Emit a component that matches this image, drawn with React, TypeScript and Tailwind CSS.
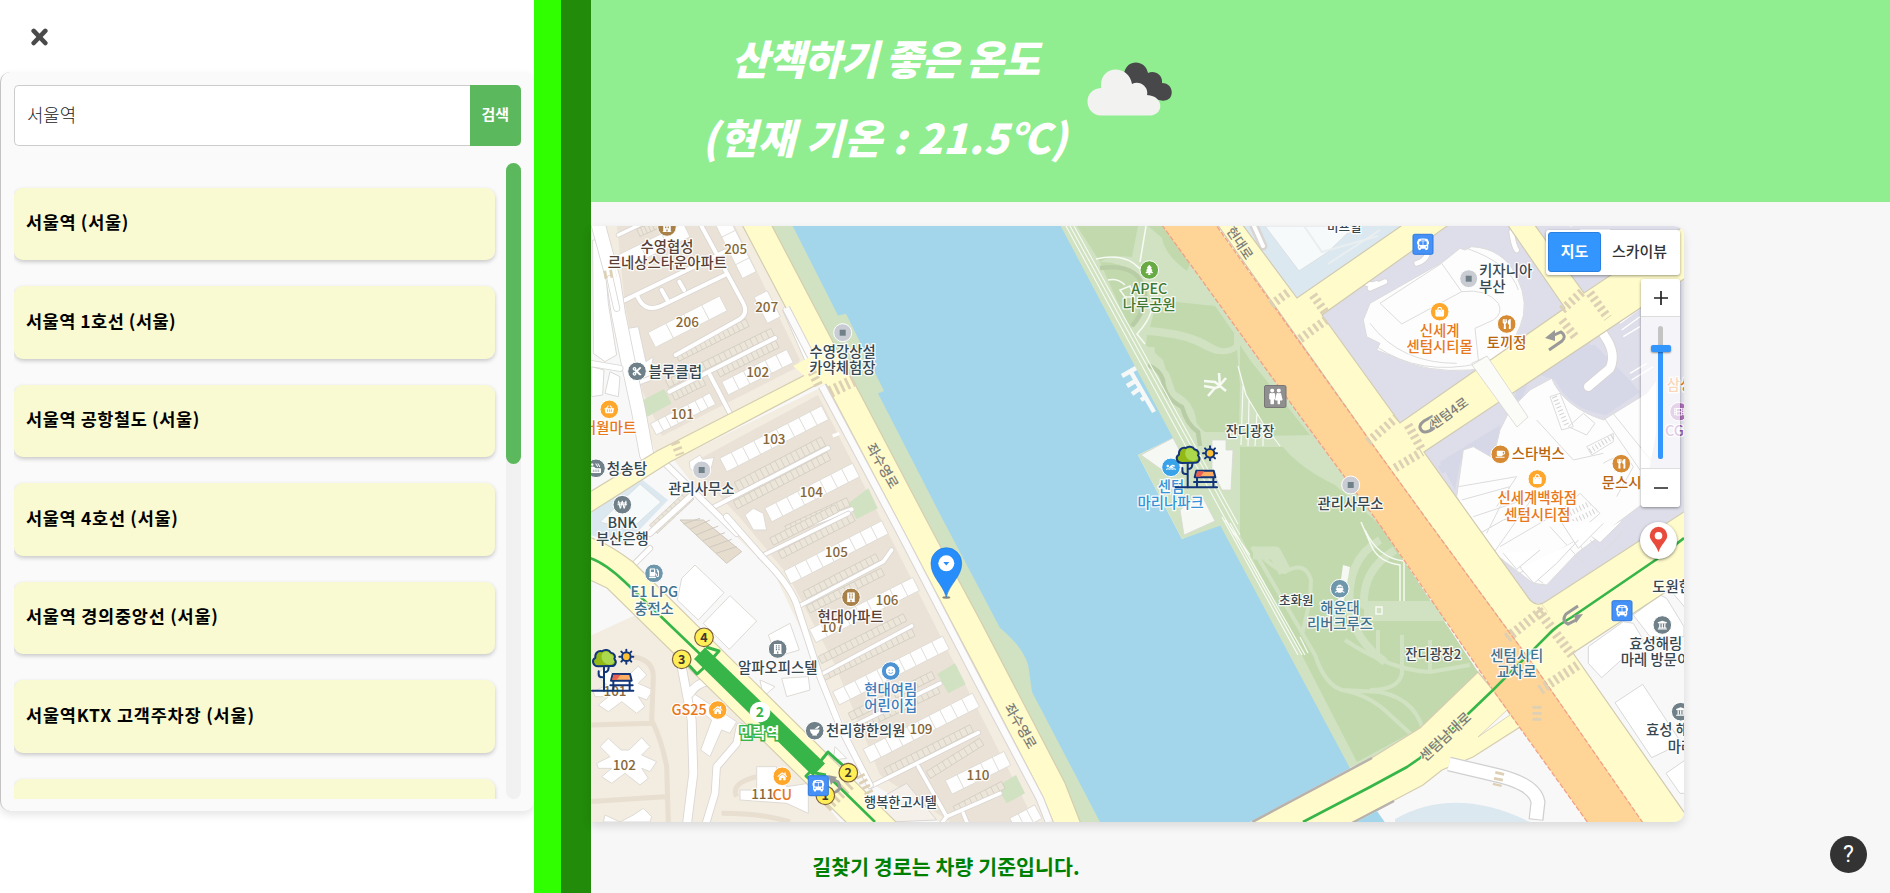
import React from "react";
import { FaTree, FaShoppingBasket, FaWonSign, FaGasPump, FaBuilding, FaUtensils, FaShoppingBag, FaCoffee, FaBusAlt, FaSwimmer, FaShip, FaMale, FaFemale, FaUniversity, FaHome, FaHotTub, FaSmile, FaCut, FaMortarPestle, FaFilm } from "react-icons/fa";

const KR = "font-['Noto_Sans_CJK_KR',sans-serif]";

const results = [
  { name: "서울역 (서울)", cls: "tracking-[0.65px]" },
  { name: "서울역 1호선 (서울)", cls: "tracking-[0.5px]" },
  { name: "서울역 공항철도 (서울)", cls: "tracking-[0.6px]" },
  { name: "서울역 4호선 (서울)", cls: "tracking-[0.7px]" },
  { name: "서울역 경의중앙선 (서울)", cls: "tracking-[0.75px]" },
  { name: "서울역KTX 고객주차장 (서울)", cls: "tracking-[0.8px]" },
  { name: "", cls: "" },
];

type StripProps = { p: [number, number, number, number]; w: number; n: number; fill?: string; stroke?: string; sw?: number };

/** A row of adjoining cells laid along a line: house blocks and parking bays. */
function Strip({ p, w, n, fill = "#fefefe", stroke = "#dedad4", sw = 2.5 }: StripProps) {
  const [x1, y1, x2, y2] = p;
  const len = Math.hypot(x2 - x1, y2 - y1);
  const a = (Math.atan2(y2 - y1, x2 - x1) * 180) / Math.PI;
  return (
    <g transform={`translate(${x1} ${y1}) rotate(${a})`} fill={fill} stroke={stroke} strokeWidth={sw}>
      <rect x={0} y={-w / 2} width={len} height={w} />
      {Array.from({ length: n - 1 }, (_, i) => (
        <line key={i} x1={((i + 1) * len) / n} x2={((i + 1) * len) / n} y1={-w / 2} y2={w / 2} />
      ))}
    </g>
  );
}

function Parking({ p, n, w = 24 }: { p: [number, number, number, number]; n: number; w?: number }) {
  return <Strip p={p} w={w} n={n} fill="#ece5d9" stroke="#cfc9be" sw={2} />;
}

function Lane({ d, w = 12 }: { d: string; w?: number }) {
  return (
    <g fill="none" strokeLinejoin="round" strokeLinecap="round">
      <path d={d} stroke="#d9d5d2" strokeWidth={w + 5} />
      <path d={d} stroke="#fff" strokeWidth={w} />
    </g>
  );
}

function Crosswalk({ p, w = 9, c = "#ddd0b4" }: { p: [number, number, number, number]; w?: number; c?: string }) {
  const [x1, y1, x2, y2] = p;
  return <line x1={x1} y1={y1} x2={x2} y2={y2} stroke={c} strokeWidth={w} strokeDasharray="2.8 3.2" />;
}

type Label = [string, number, number, string?, number?, ("start" | "middle")?, number?];
const DK = "#37474f";
const BR = "#5a4136";
const NO = "#86683a";
const OR = "#e8781a";
const OB = "#b8650f";
const BL = "#3f7390";
const ROAD = "#7d7d78";

const labels: Label[] = [
  ["107", 832.3, 627.3, NO, 13.5],
  ["101", 615, 690.7, NO, 13.5],
  ["수영협성", 667, 246.8, BR],
  ["르네상스타운아파트", 667.3, 262.8, BR],
  ["205", 735.7, 249.5, NO, 13.5],
  ["207", 766.7, 307, NO, 13.5],
  ["206", 687.3, 321.8, NO, 13.5],
  ["102", 757.7, 372, NO, 13.5],
  ["101", 682.3, 414, NO, 13.5],
  ["103", 774, 439, NO, 13.5],
  ["104", 811.3, 492.3, NO, 13.5],
  ["105", 836.3, 552, NO, 13.5],
  ["106", 887, 599.7, NO, 13.5],
  ["109", 921, 728.7, NO, 13.5],
  ["110", 978, 774.7, NO, 13.5],
  ["102", 624.3, 764.7, NO, 13.5],
  ["111", 762.7, 794.4, NO, 13.5],
  ["블루클럽", 675.3, 371.8, DK, 14.6],
  ["더월마트", 609.5, 427.5, OR, 14.6],
  ["청송탕", 627, 468.5, DK, 14.6],
  ["관리사무소", 701.4, 488.8, DK],
  ["BNK", 622.3, 522.8, DK],
  ["부산은행", 622.4, 538.8, DK],
  ["수영강상설", 842.7, 351.8, DK],
  ["카약체험장", 842.3, 367.8, DK],
  ["E1 LPG", 654.3, 592, BL],
  ["충전소", 654, 608.5, BL],
  ["현대아파트", 850.5, 616.2, BR],
  ["현대여림", 890.7, 689.7, "#3c7dbd"],
  ["어린이집", 890.7, 706, "#3c7dbd"],
  ["천리향한의원", 865.7, 730.7, DK],
  ["알파오피스텔", 777.7, 668, DK],
  ["GS25", 689, 709.8, OR],
  ["CU", 782.3, 795, OR],
  ["행복한고시텔", 900.5, 802, DK, 13.2],
  ["APEC", 1149.3, 288.4, "#3f7a35"],
  ["나루공원", 1149.3, 304.5, "#3f7a35"],
  ["잔디광장", 1250, 430.7, DK, 13.2],
  ["관리사무소", 1350.5, 503.6, DK],
  ["센텀", 1171, 486.3, "#3593d6"],
  ["마리나파크", 1170.7, 502.4, "#3593d6"],
  ["비프힐", 1344.3, 227.8, DK, 12.5],
  ["현대로", 1240, 243, ROAD, 13, "middle", 56],
  ["좌수영로", 882.7, 465.7, ROAD, 13.5, "middle", 60],
  ["좌수영로", 1020.7, 726, ROAD, 13.5, "middle", 60],
  ["초화원", 1296.3, 600.8, DK, 12.5],
  ["해운대", 1340, 607.4, BL],
  ["리버크루즈", 1340, 623.4, BL],
  ["키자니아", 1479, 270.8, DK, 14.5, "start"],
  ["부산", 1479, 287, DK, 14.5, "start"],
  ["신세계", 1439.7, 330.4, OR],
  ["센텀시티몰", 1439.7, 346.6, OR],
  ["토끼정", 1506.7, 343, OB],
  ["센텀4로", 1449, 413, ROAD, 13, "middle", -36],
  ["스타벅스", 1538.3, 454, OB],
  ["신세계백화점", 1537.3, 498, OR],
  ["센텀시티점", 1537.3, 514.4, OR],
  ["문스시", 1601.7, 482.6, OB, 14.4, "start"],
  ["삼성", 1666.7, 385, OR, 14.4, "start"],
  ["CG", 1665, 430.5, "#9a55a8", 14.4, "start"],
  ["도원한", 1652.3, 586.7, DK, 14.4, "start"],
  ["효성해링", 1629.3, 643.2, DK, 14.4, "start"],
  ["마레 방문이", 1620.7, 659.4, DK, 14.4, "start"],
  ["효성 해", 1646, 730, DK, 14.4, "start"],
  ["마레", 1667.7, 746.4, DK, 14.4, "start"],
  ["잔디광장2", 1433.3, 654, DK, 13.2],
  ["센텀시티", 1516.7, 655.4, BL],
  ["교차로", 1516.7, 671.7, BL],
  ["센텀남대로", 1445, 736.7, ROAD, 14, "middle", -43],
];

const SL = "#708089";
const pois: [number, number, string, React.ComponentType<any>][] = [
  [667, 227, "#a88148", FaBuilding],
  [637, 371.3, SL, FaCut],
  [609.3, 409.3, "#ffa72b", FaShoppingBasket],
  [596, 468.3, SL, FaHotTub],
  [622.3, 504.7, SL, FaWonSign],
  [654, 573.3, "#6f97ab", FaGasPump],
  [777.7, 649, SL, FaBuilding],
  [717.7, 710, "#ffa72b", FaHome],
  [814.7, 730.7, SL, FaMortarPestle],
  [782.3, 776.3, "#ffa72b", FaHome],
  [851, 597.3, "#a88148", FaBuilding],
  [890.7, 671, "#4d92d2", FaSmile],
  [1149.3, 270, "#68ab45", FaTree],
  [1171, 467.3, "#38a3e8", FaSwimmer],
  [1339.7, 588.7, "#6f97ab", FaShip],
  [1439.7, 311.7, "#ffa72b", FaShoppingBag],
  [1506.7, 324, "#d58a33", FaUtensils],
  [1500.3, 454.3, "#d58a33", FaCoffee],
  [1537.3, 479, "#ffa72b", FaShoppingBag],
  [1621.3, 463.7, "#d58a33", FaUtensils],
  [1679, 411.7, "#a86cb5", FaFilm],
  [1662.3, 625, SL, FaUniversity],
  [1680.7, 711.7, SL, FaUniversity],
];

const squares: [number, number][] = [[701.7, 470], [842.7, 332.7], [1350.7, 485], [1468.7, 278.7]];
const buses: [number, number][] = [[1423, 244.3], [818.3, 785.7], [1622, 610.7]];
const exits: [string, number, number][] = [["4", 704, 637.3], ["3", 681.7, 659.3], ["2", 848.3, 772.7], ["1", 825.3, 795.3]];

function ParkMarker({ x, y }: { x: number; y: number }) {
  return (
    <g transform={`translate(${x} ${y}) scale(.3333)`} stroke="#12357a" strokeWidth={6} strokeLinejoin="round" strokeLinecap="round" fill="none">
      <path d="M36 50V124M36 84H30Q20 84 20 74V66M36 68H42Q50 66 50 54V46" />
      <path d="M18 51C2 50 -2 32 10 26C8 12 18 3 30 6C38 -1 52 2 56 10C68 12 72 22 67 29C76 38 70 51 57 50Z" fill="#93b916" />
      <path d="M52 46C30 42 24 24 32 10Q50 2 54 14Q66 16 63 28Q74 42 52 46Z" fill="#acd84d" stroke="none" />
      <circle cx={103} cy={22} r={13} fill="#fcc032" />
      <path d="M103 1V5M103 39V43M82 22H86M120 22H124M88 7L91 10M115 34L118 37M118 7L115 10M91 34L88 37" />
      <path d="M62 74H114L119 94H57Z" fill="#ffad63" />
      <path d="M64 76H86L74 92H61Z" fill="#ea6153" stroke="none" />
      <path d="M64 95V123M113 95V123M55 108H122M0 124H124" />
    </g>
  );
}

function CityMap() {
  return (
    <svg className={`block h-full w-full ${KR}`} viewBox="591 226 1093 596" preserveAspectRatio="none">
      <rect x={591} y={226} width={1093} height={596} fill="#f8f8f8" />

      {/* residential land */}
      <path d="M604 226H745L812 360L806 376L655 452L637 395L622 310Z" fill="#f3ece1" />
      <path d="M617 226H735L800 360L796 368L662 436L642 390L625 305Z" fill="#eae2d6" />
      <path d="M674 460L820 388L1050 822H940L870 783L820 670L775 575L725 525Z" fill="#f3ece1" />
      <path d="M690 464L818 395L1035 822H950L880 775L835 665L788 575L742 520Z" fill="#eae2d6" />
      <path d="M590 636L655 606L700 650L840 822H590Z" fill="#f3ece1" />
      <path d="M590 505L640 478L668 500L625 545L590 535Z" fill="#dce8f0" />
      <path d="M640 484L661 502L630 530L600 522Z" fill="#f6fafb" stroke="#dbe0e3" />

      <g transform="translate(590 220) scale(.33333)">
        <path d="M150 545L222 507L245 550L172 590ZM775 850L835 805L863 865L800 897Z" fill="#d0e2c1" />
        <path d="M8 60H40L55 250L80 405L45 425L10 400ZM5 440L42 450L38 525L5 530ZM60 455L90 470L85 530L45 520ZM115 325L145 320L168 425L190 410L180 470L150 480L130 470Z" fill="#fff" stroke="#dcd9d6" strokeWidth={3} />
        <Strip p={[395, 0, 478, 165]} w={46} n={4} />
        <Strip p={[512, 222, 552, 300]} w={44} n={2} />
        <Strip p={[95, 125, 290, 30]} w={46} n={3} />
        <Strip p={[185, 360, 400, 250]} w={50} n={4} />
        <Strip p={[405, 505, 600, 408]} w={44} n={6} />
        <Strip p={[190, 628, 368, 536]} w={38} n={8} />
        <Strip p={[400, 735, 705, 578]} w={46} n={9} />
        <Strip p={[535, 885, 798, 750]} w={46} n={8} />
        <Parking p={[262, 413, 472, 308]} n={15} />
        <Parking p={[232, 492, 548, 336]} n={20} />
        <Parking p={[385, 460, 562, 372]} n={12} />
        <Parking p={[250, 530, 342, 484]} n={7} />
        <Parking p={[440, 800, 700, 664]} n={17} w={30} />
        <Parking p={[436, 855, 716, 708]} n={18} w={26} />
        <Parking p={[590, 930, 775, 845]} n={12} w={26} />
        <Parking p={[145, 38, 200, 14]} n={5} />
        <Parking p={[190, 928, 300, 825]} n={9} w={34} />
        <Lane d="M85 45L175 2" w={10} />
        <Lane d="M95 245L405 95M330 10L460 250Q475 280 450 297L257 405M142 228Q165 285 225 252L405 165M232 240L215 210M282 210L268 185" />
        <Lane d="M238 515L555 354M360 465L420 580M140 490L205 465" />
        <Lane d="M370 862L714 684M600 935L785 868" />
        <Lane d="M25 15L70 180L85 280L115 430L145 570L170 705" w={40} />
        <Lane d="M0 430L90 445M80 265L60 175" w={16} />
        <Lane d="M225 730L440 940M180 940L300 830" w={16} />
        <path d="M298 725L330 705L338 718L372 712L360 760L330 772L300 745ZM465 885L490 865L520 880L530 930H490Z" fill="#fff" stroke="#dedad4" strokeWidth={3} />
        <path d="M728 648L748 640" stroke="#fff" strokeWidth={9} />
        <Lane d="M590 270L665 440" w={20} />
      </g>

      <g transform="translate(590 520) scale(.33333)">
        <path d="M1042 462L1095 430L1127 493L1075 520ZM1220 800L1278 765L1305 820L1250 850Z" fill="#d0e2c1" />
        <path d="M270 0L340 0L455 95L410 130Z" fill="#e6ddcf" stroke="#cfc9be" strokeWidth={3} />
        <path d="M280 12L330 -5M300 28L360 0M318 45L385 18M338 62L405 38M358 82L425 58M378 100L440 80" stroke="#cfc9be" strokeWidth={3} />
        <Strip p={[592, 172, 885, 22]} w={44} n={9} />
        <Strip p={[668, 348, 978, 192]} w={44} n={9} />
        <Strip p={[738, 535, 1068, 368]} w={44} n={10} />
        <Strip p={[830, 708, 1158, 540]} w={46} n={10} />
        <Strip p={[1076, 802, 1252, 715]} w={46} n={5} />
        <Strip p={[1270, 915, 1345, 875]} w={46} n={3} />
        <Parking p={[545, 65, 740, -35]} n={13} />
        <Parking p={[570, 105, 790, -8]} n={14} />
        <Parking p={[645, 225, 862, 112]} n={14} />
        <Parking p={[655, 268, 878, 155]} n={14} />
        <Parking p={[690, 420, 945, 292]} n={16} />
        <Parking p={[700, 470, 970, 337]} n={17} />
        <Parking p={[780, 590, 1030, 465]} n={15} />
        <Parking p={[800, 625, 1045, 508]} n={15} />
        <Parking p={[888, 755, 1145, 625]} n={16} />
        <Parking p={[1015, 765, 1175, 665]} n={10} />
        <Parking p={[1095, 870, 1240, 795]} n={9} />
        <Lane d="M510 110L775 -20M620 262L880 125L905 90M690 465L965 318M755 635L1050 490M840 800L1165 638M985 740L1070 890L1230 820M1070 890L1040 930M1120 880L1140 930" w={11} />
        <Lane d="M410 -10L520 115Q610 205 625 270L690 470L750 620L840 795" w={17} />
        <path d="M275 175L315 135L402 218L325 300L262 240ZM420 227L500 303L418 388L340 310ZM535 345L600 310L628 390L560 410ZM575 475L655 470L660 510L590 530ZM735 680L770 715L730 720Z" fill="#fff" stroke="#dedad4" strokeWidth={3} />
        <path d="M310 520L440 605L420 640L395 630L360 710L332 690L365 600L300 550ZM500 740H560V780H590V800L655 790V880L590 850L450 840V810H500ZM510 480L555 500L520 530ZM45 885L90 906L130 885L160 865L185 890L180 906H40Z" fill="#fff" stroke="#dedad4" strokeWidth={3} />
        {[[105, 725], [95, 510]].map(([x, y]) => (
          <path key={y} transform={`translate(${x} ${y})`} d="M-75 -45L-50 -70L-12 -35L12 -35L50 -72L75 -45L50 -20L95 0L75 30L50 20L70 50L45 70L0 35L-40 65L-70 45L-40 20L-80 20L-85 5L-45 -15Z" fill="#fff" stroke="#dedad4" strokeWidth={3} />
        ))}
        <path d="M130 410Q190 420 190 470L185 600Q215 660 230 740L235 906M0 615L185 610M0 845L225 830M395 880Q520 880 600 906M440 830Q420 790 500 770" stroke="#e8dfd1" strokeWidth={15} fill="none" />
        <Lane d="M275 440L305 600L310 760L290 920M300 520Q320 490 350 485" w={24} />
        <Lane d="M450 620L440 670L380 740L375 820L345 920" w={20} />
        <Lane d="M135 130L180 85" w={14} />
        <path d="M900 906L860 840L950 790L1040 900Z" fill="#f5f1ea" stroke="#d9d5d2" strokeWidth={3} />
      </g>

      {/* river, banks and park */}
      <path d="M771 226H800L846 310L890 393L950 520L1005 610L1045 640L1050 700L1105 822H1075L1065 783L932 530Z" fill="#d0e2c1" />
      <path d="M1055 226H1163L1308 427L1380 525L1478 672L1420 728L1370 759L1345 770Z" fill="#d0e2c1" />
      <path d="M792.7 226L838 315.5L846 313.7L884 391L878 393.5L943 520L980 590L1000 628Q1029 652 1029.500 674L1032 692L1100 822H1250L1350 768.3L1218.3 521.7L1182 539L1138 455L1173 438L1060.7 226Z" fill="#a3d6eb" />
      <path d="M1138 455L1173 438L1222 525L1182 539Z" fill="#d0e2c1" />
      <path d="M1141 455L1173 438L1182 455L1183 470L1172 477ZM1180 510L1201 494L1215 521L1184 535Z" fill="#f6f8f4" stroke="#d8d8d2" strokeWidth={0.8} />
      <path d="M1212 440H1226V450H1233L1231 490H1222L1212 470Z" fill="#f6f8f4" stroke="#d8d8d2" strokeWidth={0.8} />

      <g fill="#c2d9ae">
        <path d="M1077 226H1138L1132 257Q1110 254 1100 262Z" />
        <path d="M1148 226H1163L1190 264L1187 271Q1165 255 1162 238Z" />
        <path d="M1157 300L1215 306L1234 333V345Q1225 352 1212 344Q1190 330 1150 327Z" />
        <path d="M1147 335Q1185 338 1200 347Q1222 360 1237 350L1240 385L1239 432H1205Q1195 425 1192 410Q1192 400 1172 390L1163 360L1146 345Z" />
        <path d="M1240 345L1250 360L1310 435L1270 436Q1245 400 1240 370Z" />
        <path d="M1240 447H1283Q1300 468 1335 485L1380 525L1478 672L1420 728L1357 762L1240 535Z" />
        <path d="M1100 262Q1140 262 1150 300L1130 330Z" />
      </g>
      <g fill="none" stroke="#d0e2c1" strokeWidth={6} strokeLinejoin="round">
        <path d="M1252 547Q1275 570 1285 572Q1305 560 1311 580L1310 600L1302 635M1252 547L1315 655Q1325 685 1342 690L1380 692Q1420 700 1425 740M1342 690Q1370 695 1390 715L1412 735" strokeWidth={4} />
        <path d="M1253 553H1275L1285 572" strokeWidth={13} />
        <path d="M1380 540Q1345 560 1350 610Q1355 640 1385 662M1395 550Q1362 570 1364 605H1442" strokeWidth={8} />
        <path d="M1364 612H1445" strokeWidth={18} />
        <path d="M1378 630V655M1402 635V675M1430 640V670M1345 640Q1390 670 1430 672L1470 665M1370 690Q1400 690 1402 672" strokeWidth={4} />
        <path d="M1150 347Q1150 365 1165 375L1172 395Q1192 405 1192 425L1203 440" strokeWidth={9} />
      </g>
      <path d="M1100 268Q1145 262 1145 300Q1142 315 1132 326M1148 365Q1160 370 1163 380Q1164 398 1182 407Q1187 425 1198 432L1200 446" fill="none" stroke="#b8cda6" strokeWidth={4.5} />
      <g fill="none" stroke="#f6faf2">
        <path d="M1070 226L1240 535M1066 226L1234 535M1074 226L1238 524" strokeWidth={1.1} />
        <path d="M1225 520L1250 555M1230 523L1305 655M1226 520L1302 655M1222 517L1298 655M1300 637L1308 653" strokeWidth={1.2} />
        <path d="M1096 259Q1125 252 1140 269M1146 226L1140 262M1108 280Q1118 278 1125 285M1151 312Q1148 322 1137 334L1145 344M1130 286L1134 297L1125 297L1120 290Z" strokeWidth={1.6} />
        <path d="M1238 366L1246 395L1264 425L1280 446M1243 386L1241 445M1249 400L1248 446M1257 413L1255 446M1263 425L1263 446" strokeWidth={1.2} />
        <path d="M1361 522L1371 545Q1378 562 1400 565V601M1365 530Q1378 558 1404 561V601M1376 607H1382V614H1376Z" strokeWidth={1.5} />
        <path d="M1204 381L1215 382L1226 391M1204 386L1215 388M1208 396L1215 388L1221 386M1219 373L1220 387M1220 385L1226 378" strokeWidth={2.6} />
      </g>
      <path d="M1122 376L1136 368M1131 372L1154 412M1127 386L1137 380M1132 394L1142 387M1141 400L1147 396" stroke="#f6f8f8" strokeWidth={4.5} fill="none" />
      <path d="M1343 565L1350 567L1344 601H1338Z" fill="#f6f8f4" />

      {/* eastern blocks */}
      <path d="M1243 226L1297 298L1403 226Z" fill="#dce8f0" />
      <path d="M1265 226L1299 271L1328 252L1355 226Z" fill="#f6fafb" stroke="#dbe0e3" />
      <path d="M1304 226L1322 252L1378 236M1328 264L1380 230" stroke="#e9eef0" strokeWidth={2} fill="none" />
      <Lane d="M1254 226L1263 246" w={4} />
      <path d="M1322 315L1400 423L1565 308L1508 226H1448Z" fill="#dedeea" />
      <path d="M1535 226L1583 293L1684 226Z" fill="#dedeea" />
      <path d="M1424 452L1532 603H1543L1684 512V275Z" fill="#dedeea" />
      <path d="M1540 375Q1550 345 1595 345L1622 372L1640 392L1606 415Q1570 410 1555 380ZM1440 462L1500 425L1494 455L1460 462L1455 490Z" fill="#d6d7e7" />
      <path d="M1440 470Q1490 440 1510 425M1518 400Q1530 345 1590 345" stroke="#d6d7e7" strokeWidth={8} fill="none" />
      <path d="M1573 653L1684 578V813Z" fill="#f8f8f8" />
      <path d="M1395 819Q1455 785 1530 822H1395Z" fill="#dce8f0" />

      <g transform="translate(1370 220) scale(.33333)">
        <g fill="#fdfdfd" stroke="#dcdcdc" strokeWidth={3} strokeLinejoin="round">
          <path d="M0 250L220 125L270 85L285 90L305 80Q400 85 440 170Q480 250 450 320Q400 440 300 450Q170 460 70 410L20 390L30 370L-10 350L-20 300Z" />
          <path d="M30 250L215 130L275 215Q350 205 385 250Q400 280 370 300L315 325L325 420M30 250L95 312L275 215M0 310Q90 430 260 430M20 380Q150 470 330 430M290 85Q420 130 445 210" fill="none" />
          <path d="M305 430L350 410L475 600L440 625Z" />
          <path d="M390 630L420 570L480 510L545 475Q580 560 700 600L830 520L860 480V640L820 850L620 1000L530 1095L490 1090L385 1010L330 950L260 830L280 690L310 680L370 715Z" />
          <path d="M540 530L570 520L610 620L575 630ZM700 590L810 750M725 575L850 730M650 680L730 640V665L665 705ZM575 870L630 820L690 880L620 940ZM595 620L640 580L675 610L650 645ZM265 800L440 770L380 860M275 840L420 800L350 940M310 890L490 830L370 1000M420 1020L520 1090M390 980L560 880L640 990M540 920L640 1030M395 1015L440 1065L620 960M660 960L700 1000L760 930" fill="none" />
          <path d="M700 730Q760 690 790 740L740 830M500 600L610 720L700 700" fill="none" />
        </g>
        <g stroke="#d2d2d2" strokeWidth={16} strokeDasharray="3 8" fill="none">
          <path d="M553 530L592 620M660 693L728 650M600 880L660 850M610 905L680 870" />
        </g>
        <Lane d="M655 500L720 445Q740 400 705 350L690 325" w={26} />
        <Lane d="M425 35Q430 75 440 90M140 130Q175 120 175 85M0 205L45 185M-20 185Q0 200 20 190" w={14} />
        <path d="M750 310L810 265M755 330L810 290M760 350L810 320M780 460L830 430M785 480L850 440M600 18L700 -10M630 30H720" stroke="#fff" strokeWidth={4} />
      </g>
      <g transform="translate(1370 520) scale(.33333)" fill="#fff" stroke="#d8d8d8" strokeWidth={3}>
        <path d="M655 380L760 305L790 310L820 360L695 473L655 430ZM790 285L870 225L890 235L942 320V350L840 350ZM735 548L818 493L935 670L845 713ZM888 760L960 710V820H930ZM925 180L960 150V280L905 215Z" />
        <path d="M330 40L400 0L460 -20M400 100L440 148L510 90M452 145L492 190L560 130L625 60M570 0L625 85L700 10M665 50L690 68L760 0" />
      </g>

      {/* main roads */}
      <g fill="#fffbcb" stroke="#d5cdb0" strokeWidth={1.2}>
        <path d="M588 493L657 451L807 374L818 384L670 462L588 514Z" />
        <path d="M741.7 224L903 530L980 676L1043 797L1054 824H1081L1065 783L980 620L931.7 530L771 224Z" />
        <path d="M588 537Q605 541 633 562L898 824H848L607 588L588 579Z" />
      </g>
      <path d="M786 308L815 364M822 386L900 532L976 678L1040 799L1049 822" fill="none" stroke="#d9d5d2" strokeWidth={8.5} />
      <path d="M786 308L815 364M822 386L900 532L976 678L1040 799L1049 822" fill="none" stroke="#fbfbfb" strokeWidth={6.5} />
      <path d="M793 366L821 351L838 381L816 386Z" fill="#fffbcb" />

      <path d="M1250 824L1370 759L1420 728L1478 672L1493 690L1520 727L1473 757L1442 770L1423 785L1370 813L1350 824Z" fill="#fffbcb" stroke="#d5cdb0" strokeWidth={1.2} />
      <path d="M1252 822L1372 758" stroke="#b8b2ac" strokeWidth={2.5} />
      <path d="M1352 823L1394 801" stroke="#b8b2ac" strokeWidth={2.5} />
      <path d="M1353 824L1377 811L1386 824Z" fill="#a3d6eb" />
      <path d="M1478 737L1507 710L1510 715Z" fill="#f8f8f8" stroke="#d5cdb0" strokeWidth={0.8} />
      <path d="M1449 764L1500 776Q1535 785 1538 802L1536 820" fill="none" stroke="#d0d0d0" strokeWidth={15} />
      <path d="M1449 764L1500 776Q1535 785 1538 802L1536 819" fill="none" stroke="#fff" strokeWidth={12.5} />

      <path d="M1217 224H1242L1297 298L1404 224H1450L1322 315L1400 423L1565 308L1507 224H1534L1584 293L1690 222V275L1424 452L1530 600Q1537 607 1545 602L1690 508V576L1573 653L1686 815V824H1643L1537 670L1427 520L1380 455Z" fill="#fffbcb" stroke="#d0cab2" strokeWidth={1.2} />
      <path d="M1162 225L1308 427L1380 525L1493 690L1588 823H1643L1537 670L1427 520L1380 455L1216 225Z" fill="#ffd497" />
      <path d="M1162 225L1308 427L1380 525L1493 690L1588 823M1643 823L1537 670L1427 520L1380 455L1216 225" fill="none" stroke="#f2a184" strokeWidth={1.3} strokeDasharray="5 2" />
      <path d="M1472 365L1487 356L1528 417L1517 427Z" fill="#fbfbf8" stroke="#d5d5d0" strokeWidth={0.8} />

      <Crosswalk p={[1271, 305, 1290, 291]} />
      <Crosswalk p={[1313, 295, 1325, 312]} />
      <Crosswalk p={[1300, 339, 1326, 320]} />
      <Crosswalk p={[1368, 442, 1396, 418]} />
      <Crosswalk p={[1408, 425, 1422, 450]} />
      <Crosswalk p={[1395, 468, 1422, 452]} />
      <Crosswalk p={[1562, 310, 1582, 292]} />
      <Crosswalk p={[1590, 293, 1608, 318]} />
      <Crosswalk p={[1562, 320, 1576, 338]} />
      <Crosswalk p={[1507, 638, 1545, 608]} w={10} />
      <Crosswalk p={[1538, 610, 1572, 655]} w={10} />
      <Crosswalk p={[1540, 690, 1578, 665]} w={10} />
      <Crosswalk p={[1537, 706, 1537, 724]} w={9} />
      <Crosswalk p={[1500, 772, 1497, 786]} w={9} />
      <Crosswalk p={[830, 392, 855, 380]} w={12} />
      <Crosswalk p={[812, 372, 820, 388]} />
      <Crosswalk p={[826, 807, 852, 782]} w={12} />
      <Crosswalk p={[860, 775, 870, 795]} />
      <Crosswalk p={[604, 275, 616, 273]} w={8} />
      <Crosswalk p={[675, 442, 680, 455]} w={9} />

      {/* subway line */}
      <g fill="none" stroke="#36b549" strokeWidth={2.6} strokeLinejoin="round">
        <path d="M590 558Q605 563 625 582L700 654M830 778L875 822" />
        <path d="M1303 822L1370 787L1407 767L1420 758L1445 736L1493 690L1553 630Q1560 624 1572 617L1657 559L1684 538" />
        <path d="M706 647L719 651L712 659M686 662L697 674L707 665M819 763L828 752L848 770M810 772L806 776L812 781M815 773L826 775" strokeWidth={3} />
      </g>
      <path d="M705 647.5L825 763.5L813 776L694 659Z" fill="#38b549" />

      {/* turn arrows */}
      <g fill="none" stroke="#999" strokeWidth={3}>
        <path d="M1549 350L1562 341Q1567 336 1561 332L1552 336" />
        <path d="M1433 416L1424 421Q1417 426 1422 431Q1426 434 1434 428" />
        <path d="M1578 606L1566 614Q1561 621 1568 624L1576 620" />
        <path d="M833 793Q843 790 838 782L832 779" />
      </g>
      <path d="M1545 338L1555 330V341ZM1430 420L1439 426L1430 432ZM1574 615L1583 614L1576 623ZM828 775L837 777L831 785Z" fill="#999" />

      {/* places */}
      {squares.map(([x, y]) => (
        <g key={x}>
          <circle cx={x} cy={y} r={9} fill="#c9cdd3" stroke="#fff" strokeWidth={1} />
          <rect x={x - 3} y={y - 3} width={6} height={6} fill="#708089" />
        </g>
      ))}
      {pois.map(([x, y, c, Icon]) => (
        <g key={`${x}-${y}`}>
          <circle cx={x} cy={y} r={9.3} fill={c} stroke="#fff" strokeWidth={1} />
          <Icon x={x - 5} y={y - 5} size={10} color="#fff" />
        </g>
      ))}
      <rect x={1264.5} y={385.5} width={21.5} height={22} rx={1.5} fill="#8f8f8f" stroke="#777" />
      <FaMale x={1264.200} y={388.500} size={16} color="#fff" />
      <FaFemale x={1270.800} y={388.500} size={16} color="#fff" />

      {exits.map(([n, x, y]) => (
        <g key={n}>
          <circle cx={x} cy={y} r={9.3} fill="#ffee55" stroke="#7b6040" strokeWidth={1.2} />
          <text x={x} y={y + 4.6} fontSize={12.5} fontWeight={700} textAnchor="middle" fill="#40382c">{n}</text>
        </g>
      ))}
      <circle cx={760} cy={712} r={10.3} fill="#fff" />
      <text x={760} y={717} fontSize={14} fontWeight={700} textAnchor="middle" fill="#38b549">2</text>
      <text x={759.3} y={737.8} fontSize={14.6} fontWeight={700} textAnchor="middle" fill="#fff" stroke="#38b549" strokeWidth={3} paintOrder="stroke">민락역</text>

      {labels.map(([t, x, y, c = DK, s = 14.4, a = "middle", r = 0], i) => (
        <text key={i} x={x} y={y} dy={s * 0.37} fontSize={s} fontWeight={500} textAnchor={a} fill={c} stroke={r ? "#fffbcb" : "#fff"} strokeOpacity={0.9} strokeWidth={2.6} strokeLinejoin="round" paintOrder="stroke" transform={r ? `rotate(${r} ${x} ${y})` : undefined}>{t}</text>
      ))}

      {buses.map(([x, y]) => (
        <g key={x}>
          <rect x={x - 10} y={y - 10} width={20} height={20} rx={1.5} fill="#4591f7" stroke="#2f78dd" />
          <FaBusAlt x={x - 6} y={y - 6} size={12} color="#fff" />
        </g>
      ))}

      <ParkMarker x={1175.7} y={446} />
      <ParkMarker x={592} y={649.3} />

      <ellipse cx={946.3} cy={597.5} rx={4} ry={1.2} fill="#555" opacity={0.7} />
      <path d="M946.3 597C942 583 931 577 931 563A15.3 15.3 0 0 1 961.7 563C961.7 577 950 583 946.3 597Z" fill="#268dfb" stroke="#1b77dc" strokeWidth={0.6} />
      <circle cx={946.3} cy={563.3} r={8} fill="#fff" />
      <path d="M943.3 562H949.3L946.3 565.5Z" fill="#268dfb" />
    </svg>
  );
}

function Sidebar() {
  return (
    <aside className="flex h-full w-[534px] shrink-0 flex-col overflow-hidden bg-white">
      <button className="mt-[28px] ml-[31px] h-[18px] w-[17px] shrink-0" aria-label="닫기">
        <svg viewBox="0 0 17 18" className="h-full w-full">
          <path d="M2.7 2.9L14.3 15M14.3 2.9L2.7 15" stroke="#4a4a4a" strokeWidth="4.6" strokeLinecap="round" />
        </svg>
      </button>
      <div className="mt-[26px] flex h-[739px] w-[534px] shrink-0 flex-col rounded-[10px] border-l border-[#c4c4c4] bg-[#fafafa] pt-[13px] pr-[13px] pl-[13px] shadow-[0_4px_8px_rgba(0,0,0,0.1)]">
        <div className="flex h-[60.5px] shrink-0">
          <div className="flex min-w-0 flex-1 items-center rounded-l-[5px] border border-r-0 border-[#ccc] bg-white pb-[2px] pl-[12px] text-[17.8px] font-light text-[#222]">서울역</div>
          <button className="w-[51.5px] rounded-r-[5px] bg-[#5cb85c] pb-[2px] text-[15px] font-bold text-white">검색</button>
        </div>
        <div className="mt-[17px] flex h-[636px] min-h-0 justify-between overflow-hidden">
          <ul className="-mr-2 h-[636px] w-[489px] overflow-hidden pt-[25px]">
            {results.map((r, i) => (
              <li key={i} className="mb-[26px] flex h-[72.5px] w-[480.5px] items-center rounded-[9px] bg-[#fafad2] pb-[3px] pl-[12px] text-[17.5px] font-bold text-black shadow-[0_2px_4px_rgba(0,0,0,0.2)]">
                <span className={r.cls}>{r.name}</span>
              </li>
            ))}
          </ul>
          <div className="h-[636px] w-[15px] rounded-full bg-[#f1f1f1]">
            <div className="h-[301px] w-full rounded-full bg-[#5cb85c]" />
          </div>
        </div>
      </div>
    </aside>
  );
}

function MapControls() {
  return (
    <div className="absolute top-[4px] right-[4px] flex flex-col items-end">
      <div className="flex h-[45px] w-[134px] items-center rounded-[3px] bg-white p-[2px] text-[15px] shadow-[0_1px_3px_rgba(0,0,0,0.4)]">
        <button className="mb-px h-[40px] w-[53px] rounded-[3px] border border-[#2a80e0] bg-[#3396ff] pb-[2px] font-bold text-white">지도</button>
        <button className="flex-1 pb-[3px] font-medium text-[#333]">스카이뷰</button>
      </div>
      <div className="mt-[4px] flex h-[228px] w-[39px] flex-col overflow-hidden rounded-[3px] shadow-[0_1px_3px_rgba(0,0,0,0.4)]">
        <button className="flex h-[38px] items-center justify-center border-b border-[#ddd] bg-white">
          <svg viewBox="0 0 16 16" className="h-4 w-4"><path d="M8 1V15M1 8H15" stroke="#222" strokeWidth="1.7" /></svg>
        </button>
        <div className="relative flex flex-1 justify-center bg-white/70 pt-[9px]">
          <div className="flex h-[133px] w-[5px] flex-col overflow-hidden rounded-full bg-[#c4c4c4] pt-[22px]">
            <div className="flex-1 bg-[#3396ff]" />
          </div>
          <div className="absolute top-[28px] left-[10px] h-[7px] w-[20px] rounded-[2px] bg-[#3396ff] shadow-[0_1px_2px_rgba(0,0,0,0.4)]" />
        </div>
        <button className="flex h-[39px] items-center justify-center border-t border-[#ddd] bg-white">
          <svg viewBox="0 0 16 16" className="h-4 w-4"><path d="M1 8H15" stroke="#222" strokeWidth="1.7" /></svg>
        </button>
      </div>
      <button className="mt-[15px] mr-[3.5px] flex h-[37px] w-[37px] items-center justify-center rounded-full bg-white pb-[2px] shadow-[0_1px_3px_rgba(0,0,0,0.5)]">
        <svg viewBox="0 0 20 27" className="h-[27px] w-[19px]">
          <path d="M10 27C7 18 .8 15 .8 9.4a9.2 9.2 0 0 1 18.4 0C19.2 15 13 18 10 27Z" fill="#e84b3c" />
          <circle cx="10" cy="9.5" r="4" fill="#fff" />
        </svg>
      </button>
    </div>
  );
}

export default function App() {
  return (
    <div className={`relative flex h-[893px] w-full overflow-hidden bg-[#f7f7f7] ${KR}`}>
      <Sidebar />
      <div className="w-[27px] shrink-0 bg-[#30ff00]" />
      <div className="w-[30px] shrink-0 bg-[#228b0a]" />
      <main className="flex min-w-0 flex-1 flex-col">
        <header className="flex h-[201.5px] shrink-0 items-start bg-[#90ee90]">
          <h1 className="ml-[109px] w-[370px] pt-[18px] text-center text-[41px] leading-[79px] font-black whitespace-nowrap text-white italic">
            <span className="block tracking-[-1.3px]">산책하기 좋은 온도</span>
            <span className="block tracking-[0.6px]">(현재 기온 : 21.5℃)</span>
          </h1>
          <svg viewBox="0 0 85 54" className="mt-[62px] ml-[17px] h-[54px] w-[85px]">
            <path d="M37 12C39 -3 58 -3 61 11C68 8 76 13 75 21C84 21 87 30 83 36Q79 40 72 38L40 30Z" fill="#48484a" />
            <path d="M14 53.5C-3 53 -5 27 14 26C12 2 42 2 45 22C53 18 62 25 60 33C77 34 77 52 64 53.5Z" fill="#f2f2f0" />
          </svg>
        </header>
        <div className="relative mt-[24.5px] h-[596px] w-[1093px] shrink-0 overflow-hidden rounded-r-[10px] shadow-[0_4px_10px_rgba(0,0,0,0.12)]">
          <CityMap />
          <MapControls />
        </div>
        <p className="mt-[28px] w-[710px] text-center text-[20.5px] leading-[32px] font-bold text-[#008000]">
          <span className="tracking-[0.1px]">길찾기 경로는 차량 기준입니다.</span>
        </p>
      </main>
      <button className="absolute right-[23px] bottom-[20px] h-[37px] w-[37px] rounded-full bg-[#333] font-['Roboto',sans-serif] text-[23px] leading-[37px] text-white">?</button>
    </div>
  );
}
